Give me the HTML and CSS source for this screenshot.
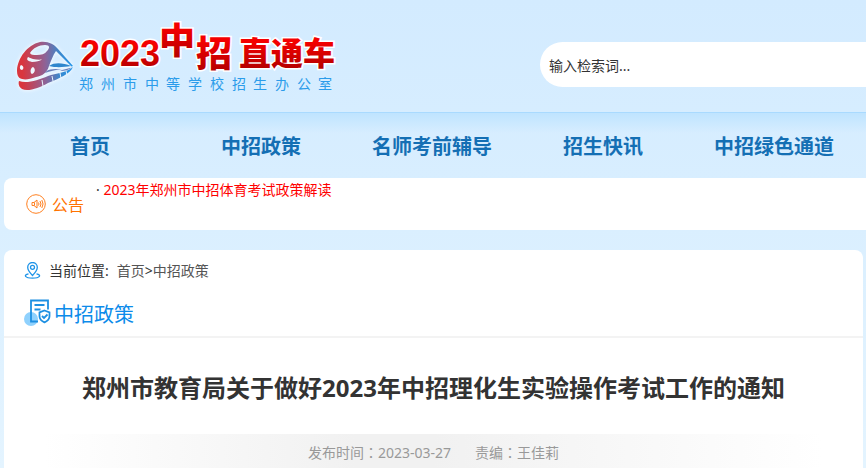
FILE: index.html
```
<!DOCTYPE html>
<html lang="zh-CN">
<head>
    <meta charset="UTF-8">
    <meta name="viewport" content="width=device-width, initial-scale=1.0">
    <title>郑州市教育局关于做好2023年中招理化生实验操作考试工作的通知</title>
    <link rel="stylesheet" href="styles.css">
</head>
<body>
    <header class="header">
        <a href="#" class="logo">
            <svg width="330" height="100" viewBox="10 0 330 100" role="img" aria-label="2023中招直通车">
                <defs>
                    <linearGradient id="red" x1="0" y1="0" x2="0" y2="1">
                        <stop offset="0.3" stop-color="#f40000"/>
                        <stop offset="0.85" stop-color="#b80000"/>
                    </linearGradient>
                    <linearGradient id="train" gradientUnits="userSpaceOnUse" x1="17" y1="0" x2="73" y2="0">
                        <stop offset="0.1" stop-color="#d9363e"/>
                        <stop offset="0.5" stop-color="#8f6295"/>
                        <stop offset="0.75" stop-color="#3e87cb"/>
                        <stop offset="1" stop-color="#2096ec"/>
                    </linearGradient>
                </defs>
                <!-- train -->
                <g class="train">
                    <path fill="url(#train)" fill-rule="evenodd" d="M17 70C18 58 27 45 40 42C48 41 54 44 58 49L73 66L71.500 66.500L56 51C53 55 51 61 49 66C47 73 42 76 36 77C30 79 26 80 22 79C18 78 17 75 17 70ZM30 53C33 48 39 45 45 45C50 45 50 48 47 51C45 54 41 55 37 55C33 55 31 55 30 53ZM28 57C26 60 28 61 32 62C36 62 40 61 42 59.500C37 60 31 59 28 57ZM21 65C19 67 20 70 22 70C24 69 24 66 21 65ZM33 67C30 68 30 73 32 74C35 73 36 69 33 67Z"/>
                    <path fill="url(#train)" d="M19 81C27 84 38 80 48 76C56 73 66 73 73 67C70 74 60 78 48 83C39 88 28 92 22 89C19 87 18 84 19 81Z"/>
                    <path fill="#2e86cd" d="M49 66C55 62 63 63 71 66C64 67 57 68 49 66Z"/>
                    <path fill="#6a7fba" d="M45 73C47 69 52 69 62 69C55 70 50 71 45 73ZM62 70L72 67.500C69 70 65 71 60 71Z"/>
                    <path fill="none" stroke="#e8f4ff" d="M42 80L43 86M52 76L53 81M60 73L61 78M66 71L67 75"/>
                </g>
                <g class="logo-title">
                    <text class="logo-year" x="80" y="66">2023</text>
                    <text class="logo-zhong" x="159" y="54">中</text>
                    <text class="logo-zhao" x="196" y="67">招</text>
                    <text class="logo-name" x="239" y="65">直通车</text>
                </g>
                <text class="logo-office" x="79 101 123 145 166 188 210 232 253 275 297 318" y="89">郑州市中等学校招生办公室</text>
            </svg>
        </a>
        <form class="search">
            <input type="text" class="search-input" value="输入检索词..." aria-label="输入检索词">
        </form>
    </header>

    <nav class="nav">
        <ul>
            <li><a href="#">首页</a></li>
            <li><a href="#">中招政策</a></li>
            <li><a href="#">名师考前辅导</a></li>
            <li><a href="#">招生快讯</a></li>
            <li><a href="#">中招绿色通道</a></li>
        </ul>
    </nav>

    <!-- notice -->
    <section class="notice">
        <h2>
            <svg width="20" height="20" viewBox="0 0 20 20" fill="none" stroke="#ff8020">
                <circle cx="10" cy="10" r="9.300"/>
                <path d="M6 8.500h2l3-2.500v8l-3-2.500H6zM8.500 8.500v3M12.500 8.500q1 1.500 0 3M14 7q2 3 0 6M15.800 6q2.500 4 0 8"/>
            </svg>
            公告
        </h2>
        <ul>
            <li>· <a href="#">2023年郑州市中招体育考试政策解读</a></li>
        </ul>
    </section>

    <main class="content">
        <div class="position">
            <svg width="17" height="17" viewBox="0 0 17 17" fill="none" stroke="#1e94e8" stroke-width="1.300">
                <path d="M8.500 13.500C5 10 3.700 7.500 3.700 5.300a4.800 4.800 0 0 1 9.600 0c0 2.200-1.300 4.700-4.800 8.200z"/>
                <circle cx="8.500" cy="5.300" r="2"/>
                <path d="M4.500 11.800C-1 13 1 16.200 8.500 16.200s9.500-3.200 4-4.400"/>
            </svg>
            <span>当前位置:</span>
            <div><a href="#">首页</a>&gt;<a href="#">中招政策</a></div>
        </div>
        <h2 class="column">
            <svg width="28" height="28" viewBox="0 0 28 28" fill="none" stroke="#1e90e2" stroke-width="1.800">
                <circle cx="7" cy="20" r="7" fill="#8fd1fd" stroke="none"/>
                <path d="M14 22.500H7V1.500h17v9M10.500 6h10M10.500 10.500h6"/>
                <path fill="#fff" d="M20.500 11.500l5 1.800v4c0 3-2 4.700-5 6-3-1.300-5-3-5-6v-4z"/>
                <path d="M18 17l2 2 3.500-3.500"/>
            </svg>
            中招政策
        </h2>
        <article>
            <h1>郑州市教育局关于做好2023年中招理化生实验操作考试工作的通知</h1>
            <p class="info"><span>发布时间<i lang="zh-TW">：</i>2023-03-27</span><span>责编<i lang="zh-TW">：</i>王佳莉</span></p>
        </article>
    </main>
</body>
</html>
```
FILE: styles.css
```
* {
    margin: 0;
    padding: 0;
    box-sizing: border-box;
}
body {
    font-family: "Noto Sans", "Noto Sans CJK SC", sans-serif;
    font-size: 14px;
    color: #333;
    background: linear-gradient(#d3ebff, #d8eeff 180px, #e4f4ff 468px) no-repeat #e4f4ff;
    overflow-x: hidden;
}
a {
    color: inherit;
    text-decoration: none;
}
ul {
    list-style: none;
}
svg {
    display: block;
    flex: none;
}

/* header */
.header {
    display: flex;
    align-items: flex-start;
    justify-content: space-between;
    height: 112px;
    padding-left: 10px;
}
.train {
    filter: drop-shadow(0 0 2px #fff);
}
.logo-title {
    stroke: #fff;
    stroke-width: 3px;
    paint-order: stroke;
    font-weight: 900;
}
.logo-title text {
    fill: url(#red);
}
.logo-year {
    font-family: "Liberation Sans", sans-serif;
    font-size: 36px;
}
.logo-zhong,
.logo-zhao {
    font-family: "Noto Sans CJK SC", sans-serif;
    font-size: 36px;
}
.logo-name {
    font-family: "Noto Sans CJK SC", sans-serif;
    font-size: 32px;
}
.logo-office {
    font-family: "Noto Sans CJK SC", sans-serif;
    font-size: 14px;
    fill: #2b9cea;
}
.search {
    width: 380px;
    margin: 42px -54px 0 0;
}
.search-input {
    width: 100%;
    height: 45px;
    padding: 0 9px;
    border: 0;
    border-radius: 23px;
    background: #fff;
    font: inherit;
    color: #333;
    outline: none;
}

/* nav */
.nav {
    height: 66px;
    border-top: 1px solid #a9daff;
    background: linear-gradient(#bfe4ff, rgba(191, 228, 255, 0) 20px);
}
.nav ul {
    display: flex;
    gap: 71px;
    padding-left: 70px;
    line-height: 68px;
}
.nav li {
    min-width: 80px;
    white-space: nowrap;
    font-size: 20px;
    font-weight: bold;
    color: #146fb4;
}

/* notice */
.notice {
    display: flex;
    gap: 12px;
    height: 52px;
    margin: 0 -20px 20px 4px;
    padding-left: 22px;
    border-radius: 8px;
    background: #fff;
}
.notice h2 {
    display: flex;
    align-items: center;
    gap: 6px;
    font-size: 16px;
    font-weight: normal;
    color: #ff7300;
}
.notice li {
    line-height: 24px;
}
.notice li a {
    color: #f00;
}

/* content */
.content {
    margin: 0 3px 0 4px;
    border-radius: 8px 8px 0 0;
    background: #fff;
}
.position {
    display: flex;
    align-items: center;
    gap: 8px;
    height: 40px;
    padding-left: 20px;
}
.position a {
    color: #555;
}
.column {
    display: flex;
    align-items: center;
    gap: 2px;
    height: 48px;
    padding-left: 20px;
    border-bottom: 2px solid #f3f3f3;
    font-size: 20px;
    font-weight: normal;
    color: #0c8bea;
}
article h1 {
    padding: 32px 0 28px;
    font-size: 24px;
    line-height: 36px;
    text-align: center;
}
.info {
    display: flex;
    justify-content: center;
    gap: 24px;
    margin: 0 40px;
    background: linear-gradient(90deg, #fff, #f1f1f1 40%, #f1f1f1 50%, #fff);
    line-height: 36px;
    color: #999;
}
/* centred colon */
.info i {
    font-family: "Noto Sans CJK TC", sans-serif;
    font-style: normal;
}
```
